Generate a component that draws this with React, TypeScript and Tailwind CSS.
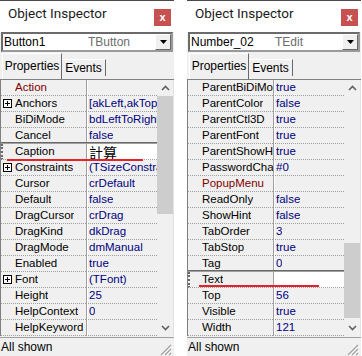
import React from 'react';

type Row = {
  name: string;
  value?: string;
  plus?: boolean;
  red?: boolean;
  sel?: boolean;
};

const leftRows: Row[] = [
  { name: 'Action', red: true },
  { name: 'Anchors', value: '[akLeft,akTop]', plus: true },
  { name: 'BiDiMode', value: 'bdLeftToRight' },
  { name: 'Cancel', value: 'false' },
  { name: 'Caption', value: '計算', sel: true },
  { name: 'Constraints', value: '(TSizeConstraints)', plus: true },
  { name: 'Cursor', value: 'crDefault' },
  { name: 'Default', value: 'false' },
  { name: 'DragCursor', value: 'crDrag' },
  { name: 'DragKind', value: 'dkDrag' },
  { name: 'DragMode', value: 'dmManual' },
  { name: 'Enabled', value: 'true' },
  { name: 'Font', value: '(TFont)', plus: true },
  { name: 'Height', value: '25' },
  { name: 'HelpContext', value: '0' },
  { name: 'HelpKeyword', value: '' },
];

const rightRows: Row[] = [
  { name: 'ParentBiDiMode', value: 'true' },
  { name: 'ParentColor', value: 'false' },
  { name: 'ParentCtl3D', value: 'true' },
  { name: 'ParentFont', value: 'true' },
  { name: 'ParentShowHint', value: 'true' },
  { name: 'PasswordChar', value: '#0' },
  { name: 'PopupMenu', red: true },
  { name: 'ReadOnly', value: 'false' },
  { name: 'ShowHint', value: 'false' },
  { name: 'TabOrder', value: '3' },
  { name: 'TabStop', value: 'true' },
  { name: 'Tag', value: '0' },
  { name: 'Text', value: '', sel: true },
  { name: 'Top', value: '56' },
  { name: 'Visible', value: 'true' },
  { name: 'Width', value: '121' },
];

const ui = { fontFamily: '"Liberation Sans", Arial, sans-serif' };

function PlusBox() {
  return (
    <svg width="9" height="9" viewBox="0 0 9 9" className="ml-[2px] mr-[3px] shrink-0">
      <rect x="0.5" y="0.5" width="8" height="8" fill="#fff" stroke="#000" />
      <path d="M2 4.5h5M4.5 2v5" stroke="#000" />
    </svg>
  );
}

function Chevron({ up }: { up?: boolean }) {
  return (
    <svg width="9" height="6" viewBox="0 0 9 6">
      <path d={up ? 'M1 5 L4.5 1.5 L8 5' : 'M1 1 L4.5 4.5 L8 1'} fill="none" stroke="#606060" strokeWidth="1.6" />
    </svg>
  );
}

function PropRow({ row }: { row: Row }) {
  return (
    <div className="relative flex h-[16px]">
      {row.sel && (
        <div className="absolute left-0 right-0 top-[-2px] h-[2px] border-t border-b border-t-[#696969] border-b-[#a0a0a0]" />
      )}
      <div
        className={`flex w-[85px] items-center overflow-hidden whitespace-nowrap border-b border-dotted border-[#a0a0a0] text-black ${
          row.sel ? 'border-l-2 border-l-[#696969]' : ''
        } ${row.plus ? '' : row.sel ? 'pl-[12px]' : 'pl-[14px]'}`}
      >
        {row.plus && <PlusBox />}
        <span className={`overflow-hidden ${row.red ? 'text-[#800000]' : ''}`}>{row.name}</span>
      </div>
      <div className="w-[1px] bg-[#a0a0a0]" />
      <div className="w-[1px] bg-white" />
      <div
        className={`flex w-[69px] items-center overflow-hidden whitespace-nowrap border-b border-dotted border-[#a0a0a0] pl-[1px] ${
          row.sel ? 'bg-white text-black' : 'text-[#000080]'
        }`}
      >
        {row.sel ? (
          <span style={{ fontFamily: '"Noto Sans CJK TC", "Noto Sans CJK SC", sans-serif' }} className="text-[14px] leading-[14px]">
            {row.value}
          </span>
        ) : (
          <span className="overflow-hidden">{row.value}</span>
        )}
      </div>
    </div>
  );
}

function Panel({
  comp,
  cls,
  rows,
  thumb,
  red,
}: {
  comp: string;
  cls: string;
  rows: Row[];
  thumb: string;
  red: string;
}) {
  return (
    <div className="relative flex h-[356px] w-[174px] flex-col bg-[#f0f0f0] text-[11.5px] leading-[15px]" style={ui}>
      {/* title */}
      <div className="flex h-[32px] items-start justify-between border-t border-[#4a4a4a] bg-white">
        <span
          className="ml-[8px] mt-[5px] text-[13.5px] text-[#1a1a1a]"
          style={{ fontFamily: 'Roboto, "Noto Sans", sans-serif' }}
        >
          Object Inspector
        </span>
        <div className="mr-[3px] mt-[8px] flex h-[17px] w-[17px] items-center justify-center bg-[#c75050] text-[11px] font-bold leading-none text-white">
          x
        </div>
      </div>

      {/* component combo */}
      <div className="ml-[1px] flex h-[20px] w-[172px] items-center border-2 border-t-[#6b6b6b] border-l-[#6b6b6b] border-r-[#9a9a9a] border-b-[#9a9a9a] bg-white text-[12px]">
        <span className="w-[85px] pl-[1px] text-black">{comp}</span>
        <span className="flex-1 text-[#6d6d6d]">{cls}</span>
        <div className="flex h-[16px] w-[16px] items-center justify-center border border-t-white border-l-white border-r-[#696969] border-b-[#696969] bg-[#f0f0f0]">
          <svg width="7" height="4" viewBox="0 0 7 4">
            <path d="M0 0h7L3.5 4z" fill="#000" />
          </svg>
        </div>
      </div>

      {/* tabs */}
      <div className="flex h-[27px] items-end pl-[2px]">
        <div className="flex h-[26px] w-[60px] items-center justify-center border-l border-t border-r border-l-white border-t-white border-r-[#696969] text-[12px] text-black">
          Properties
        </div>
        <div className="mb-[3px] flex h-[17px] w-[44px] items-center justify-center border-t border-r border-t-white border-r-[#696969] text-[12px] text-black">
          Events
        </div>
      </div>

      {/* grid */}
      <div className="flex h-[257px] border-t border-l border-[#808080]">
        <div className="flex w-[156px] flex-col">
          {rows.map((r) => (
            <PropRow key={r.name} row={r} />
          ))}
        </div>
        <div className="flex w-[16px] flex-col bg-[#f0f0f0]">
          <div className="flex h-[16px] items-center justify-center">
            <Chevron up />
          </div>
          <div className="flex-1">
            <div className={`bg-[#cdcdcd] ${thumb}`} />
          </div>
          <div className="flex h-[16px] items-center justify-center">
            <Chevron />
          </div>
        </div>
        <div className="w-[1px] bg-[#e3e3e3]" />
      </div>

      {/* status */}
      <div className="mt-[1px] flex h-[19px] items-center justify-between border-t border-[#a0a0a0] pl-[1px] text-[12px] text-black">
        <span>All shown</span>
        <svg width="13" height="13" viewBox="0 0 13 13" className="mr-[2px] mt-[4px]">
          <path d="M12 2 L2 12 M12 6 L6 12 M12 10 L10 12" stroke="#a0a0a0" strokeWidth="1.2" />
          <path d="M13 3 L3 13 M13 7 L7 13" stroke="#ffffff" strokeWidth="1" />
        </svg>
      </div>

      {/* red annotation underline */}
      <div className={`absolute h-[2px] bg-[#e8202a] ${red}`} />
    </div>
  );
}

export default function App() {
  return (
    <div className="flex h-[356px] w-[362px] gap-[13px] overflow-hidden bg-white">
      <Panel comp="Button1" cls="TButton" rows={leftRows} thumb="h-[118px]" red="left-[7px] top-[159px] w-[136px]" />
      <Panel comp="Number_02" cls="TEdit" rows={rightRows} thumb="mt-[147px] h-[75px]" red="left-[12px] top-[285px] w-[120px]" />
    </div>
  );
}
